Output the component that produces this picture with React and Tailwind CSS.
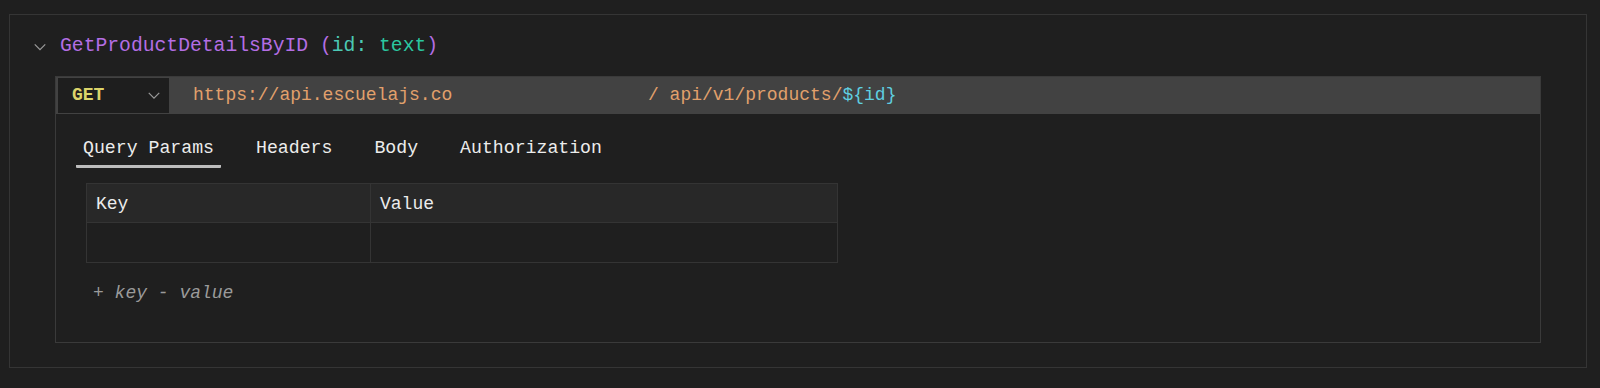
import React, { useState } from "react";

const mono = { fontFamily: '"Liberation Mono", "Courier New", monospace' };

const Chevron = ({ className }) => (
	<svg viewBox="0 0 16 10" className={className} fill="none" stroke="currentColor" strokeWidth="1.4">
		<path d="M2 2l6 6 6-6" />
	</svg>
);

const tabs = ["Query Params", "Headers", "Body", "Authorization"];

const App = () => {
	const [active, setActive] = useState("Query Params");

	return (
		<div className="w-[1600px] h-[388px] bg-[#1f1f1f] pt-[14px] pl-[9px]" style={mono}>
			<div className="w-[1578px] h-[354px] border border-[#353535] pt-[19px]">
				<div className="flex items-center h-[26px] pl-[23px]">
					<Chevron className="w-[14px] h-[10px] text-[#9a9a9a]" />
					<div className="ml-[13px] text-[19.7px] leading-none">
						<span className="text-[#b46ee4]">GetProductDetailsByID</span>
						<span className="text-[#b46ee4]"> (</span>
						<span className="text-[#4cc8b4]">id: </span>
						<span className="text-[#2bc7a0]">text</span>
						<span className="text-[#b46ee4]">)</span>
					</div>
				</div>

				<div className="ml-[45px] mt-[16px] w-[1486px] h-[267px] border border-[#3a3a3a]">
					<div className="flex items-center h-[37px] bg-[#424242] pl-[2px]">
						<div className="flex items-center justify-between w-[111px] h-[35px] bg-[#1e1e1e] pl-[14px] pr-[8px] text-[18px] font-bold text-[#dcd46a]">
							GET
							<Chevron className="w-[14px] h-[9px] text-[#9a9a9a]" />
						</div>
						<div className="flex items-center text-[18px] text-[#e1a06c]">
							<span className="ml-[24px] w-[455px]">https://api.escuelajs.co</span>
							<span>/ api/v1/products/</span>
							<span className="text-[#5fcfe0]">{"${id}"}</span>
						</div>
					</div>

					<div className="flex gap-[28px] pl-[20px] pt-[23px]">
						{tabs.map((t) => (
							<button
								key={t}
								onClick={() => setActive(t)}
								className={
									"px-[7px] pb-[6px] text-[18.2px] leading-[22px] text-[#ececec] border-b-[3px] rounded-[1px] " +
									(active === t ? "border-[#bdbdbd]" : "border-transparent")
								}
							>
								{t}
							</button>
						))}
					</div>

					<div className="ml-[30px] mt-[15px] w-[752px] border border-[#343434] text-[18px] text-[#ececec]">
						<div className="flex h-[39px] bg-[#282828] border-b border-[#343434]">
							<div className="w-[284px] border-r border-[#343434] flex items-center pl-[9px] pt-[2px]">Key</div>
							<div className="flex-1 flex items-center pl-[9px] pt-[2px]">Value</div>
						</div>
						<div className="flex h-[39px] bg-[#1f1f1f]">
							<div className="w-[284px] border-r border-[#343434]" />
							<div className="flex-1" />
						</div>
					</div>

					<div className="ml-[37px] mt-[17px] text-[18px] italic text-[#9a9a9a]">+ key - value</div>
				</div>
			</div>
		</div>
	);
};

export default App;
